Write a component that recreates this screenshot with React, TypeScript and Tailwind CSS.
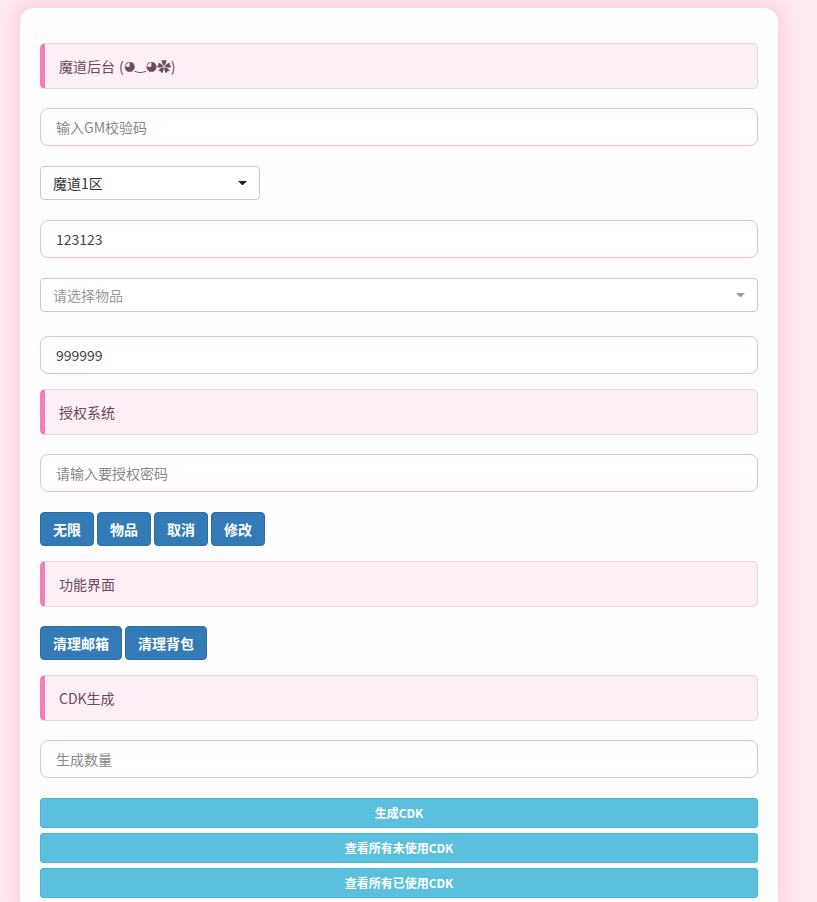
import React from "react";

const font = { fontFamily: '"Noto Sans CJK SC", "Noto Sans", sans-serif' };

function SectionTitle({ children }: { children: React.ReactNode }) {
  return (
    <div className="h-[46px] flex items-center rounded-[5px] border border-[#e6d6de] border-l-[5px] border-l-[#f57eb6] bg-[#fdeff6] pl-[14px] text-[14px] text-[#6a4a5c]">
      {children}
    </div>
  );
}

function PinkInput({ placeholder, value }: { placeholder?: string; value?: string }) {
  return (
    <input
      className="block w-full h-[38px] rounded-[8px] border border-[#f0bccb] bg-white px-[15px] text-[14px] text-[#444] placeholder:text-[#888] outline-none"
      placeholder={placeholder}
      defaultValue={value}
      style={font}
    />
  );
}

function Caret({ color, w }: { color: string; w: number }) {
  return (
    <svg width={w} height={w / 2} viewBox="0 0 10 5">
      <path d="M0 0 L10 0 L5 5 Z" fill={color} />
    </svg>
  );
}

function BlueBtn({ children }: { children: React.ReactNode }) {
  return (
    <button className="h-[34px] px-[12px] rounded-[4px] border border-[#2e6da4] bg-[#337ab7] text-[14px] font-bold text-white">
      {children}
    </button>
  );
}

function InfoBtn({ children }: { children: React.ReactNode }) {
  return (
    <button className="block w-full h-[30px] rounded-[3px] border border-[#46b8da] bg-[#5bc0de] text-[12px] font-bold text-white">
      {children}
    </button>
  );
}

export default function App() {
  return (
    <div className="min-h-[902px] bg-[#fde9f1] px-[20px] pt-[8px]" style={font}>
      <div className="w-[758px] rounded-[14px] bg-[#fefefe] px-[20px] pt-[35px] pb-[20px] shadow-[0_0_18px_6px_rgba(250,190,215,0.55)]">
        <SectionTitle>
          魔道后台
          <span className="ml-[4px]">(</span>
          <span className="font-['DejaVu_Sans',sans-serif] text-[13px]">◕‿◕</span>
          <span>✿)</span>
        </SectionTitle>

        <div className="mt-[19px]">
          <PinkInput placeholder="输入GM校验码" />
        </div>

        <div className="mt-[20px] w-[220px] h-[34px] flex items-center justify-between rounded-[4px] border border-[#c8c8c8] bg-white pl-[12px] pr-[12px] text-[14px] text-[#333]">
          <span>魔道1区</span>
          <Caret color="#222" w={9} />
        </div>

        <div className="mt-[20px]">
          <PinkInput value="123123" />
        </div>

        <div className="mt-[20px] h-[34px] flex items-center justify-between rounded-[4px] border border-[#c8c8c8] bg-white pl-[12px] pr-[12px] text-[14px] text-[#999]">
          <span>请选择物品</span>
          <Caret color="#999" w={9} />
        </div>

        <div className="mt-[24px]">
          <PinkInput value="999999" />
        </div>

        <div className="mt-[15px]">
          <SectionTitle>授权系统</SectionTitle>
        </div>

        <div className="mt-[19px]">
          <PinkInput placeholder="请输入要授权密码" />
        </div>

        <div className="mt-[20px] flex gap-[3px]">
          <BlueBtn>无限</BlueBtn>
          <BlueBtn>物品</BlueBtn>
          <BlueBtn>取消</BlueBtn>
          <BlueBtn>修改</BlueBtn>
        </div>

        <div className="mt-[15px]">
          <SectionTitle>功能界面</SectionTitle>
        </div>

        <div className="mt-[19px] flex gap-[3px]">
          <BlueBtn>清理邮箱</BlueBtn>
          <BlueBtn>清理背包</BlueBtn>
        </div>

        <div className="mt-[15px]">
          <SectionTitle>CDK生成</SectionTitle>
        </div>

        <div className="mt-[19px]">
          <PinkInput placeholder="生成数量" />
        </div>

        <div className="mt-[20px] flex flex-col gap-[5px]">
          <InfoBtn>生成CDK</InfoBtn>
          <InfoBtn>查看所有未使用CDK</InfoBtn>
          <InfoBtn>查看所有已使用CDK</InfoBtn>
        </div>
      </div>
    </div>
  );
}
